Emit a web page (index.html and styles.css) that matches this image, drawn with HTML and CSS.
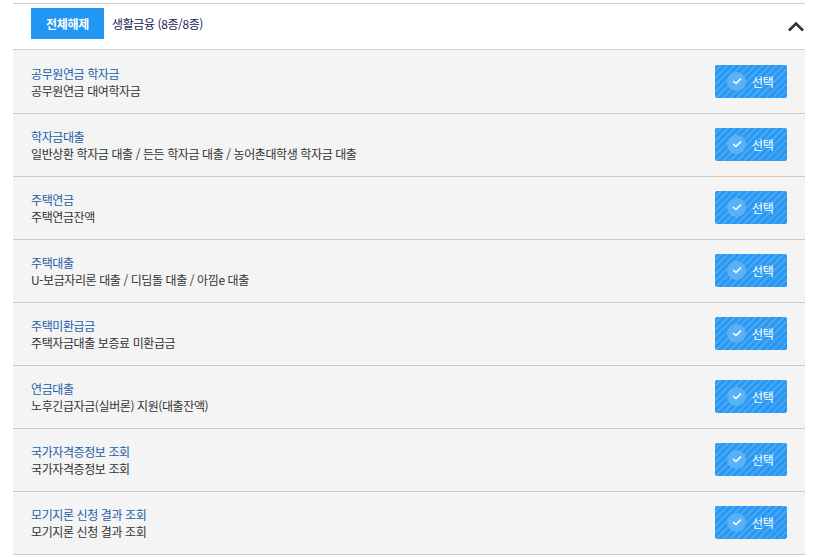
FILE: index.html
```html
<!DOCTYPE html>
<html lang="ko">
<head>
<meta charset="utf-8">
<link rel="stylesheet" href="styles.css">
</head>
<body>
<div class="panel">
  <div class="panel-head">
    <button class="btn-release">전체해제</button>
    <span class="cat">생활금융 (8종/8종)</span>
    <svg class="chev" width="18" height="11" viewBox="0 0 18 11"><path d="M2 9.5 L9 2.5 L16 9.5" fill="none" stroke="#333" stroke-width="2.6"/></svg>
  </div>
  <ul class="list">
    <li class="row"><div class="txt"><div class="t">공무원연금 학자금</div><div class="s">공무원연금 대여학자금</div></div><button class="sel"><span class="ck"><svg width="10" height="8" viewBox="0 0 10 8"><path d="M1 4 L4 6.5 L9 1.5" fill="none" stroke="#fff" stroke-width="1.6"/></svg></span>선택</button></li>
    <li class="row"><div class="txt"><div class="t">학자금대출</div><div class="s">일반상환 학자금 대출 / 든든 학자금 대출 / 농어촌대학생 학자금 대출</div></div><button class="sel"><span class="ck"><svg width="10" height="8" viewBox="0 0 10 8"><path d="M1 4 L4 6.5 L9 1.5" fill="none" stroke="#fff" stroke-width="1.6"/></svg></span>선택</button></li>
    <li class="row"><div class="txt"><div class="t">주택연금</div><div class="s">주택연금잔액</div></div><button class="sel"><span class="ck"><svg width="10" height="8" viewBox="0 0 10 8"><path d="M1 4 L4 6.5 L9 1.5" fill="none" stroke="#fff" stroke-width="1.6"/></svg></span>선택</button></li>
    <li class="row"><div class="txt"><div class="t">주택대출</div><div class="s">U-보금자리론 대출 / 디딤돌 대출 / 아낌e 대출</div></div><button class="sel"><span class="ck"><svg width="10" height="8" viewBox="0 0 10 8"><path d="M1 4 L4 6.5 L9 1.5" fill="none" stroke="#fff" stroke-width="1.6"/></svg></span>선택</button></li>
    <li class="row"><div class="txt"><div class="t">주택미환급금</div><div class="s">주택자금대출 보증료 미환급금</div></div><button class="sel"><span class="ck"><svg width="10" height="8" viewBox="0 0 10 8"><path d="M1 4 L4 6.5 L9 1.5" fill="none" stroke="#fff" stroke-width="1.6"/></svg></span>선택</button></li>
    <li class="row"><div class="txt"><div class="t">연금대출</div><div class="s">노후긴급자금(실버론) 지원(대출잔액)</div></div><button class="sel"><span class="ck"><svg width="10" height="8" viewBox="0 0 10 8"><path d="M1 4 L4 6.5 L9 1.5" fill="none" stroke="#fff" stroke-width="1.6"/></svg></span>선택</button></li>
    <li class="row"><div class="txt"><div class="t">국가자격증정보 조회</div><div class="s">국가자격증정보 조회</div></div><button class="sel"><span class="ck"><svg width="10" height="8" viewBox="0 0 10 8"><path d="M1 4 L4 6.5 L9 1.5" fill="none" stroke="#fff" stroke-width="1.6"/></svg></span>선택</button></li>
    <li class="row"><div class="txt"><div class="t">모기지론 신청 결과 조회</div><div class="s">모기지론 신청 결과 조회</div></div><button class="sel"><span class="ck"><svg width="10" height="8" viewBox="0 0 10 8"><path d="M1 4 L4 6.5 L9 1.5" fill="none" stroke="#fff" stroke-width="1.6"/></svg></span>선택</button></li>
  </ul>
</div>
</body>
</html>
```

FILE: styles.css
```css
html, body {
  margin: 0;
  padding: 0;
  background: #fff;
}
body {
  font-family: "Noto Sans CJK KR", "Noto Sans", sans-serif;
  font-size: 12px;
  color: #333;
  padding: 3px 15px 0 13px;
}
.panel {
  border-top: 1px solid #cfcfcf;
}
.panel-head {
  display: flex;
  align-items: center;
  height: 45px;
  padding: 0 0 0 18px;
  background: #fff;
  border-bottom: 1px solid #cfcfcf;
}
.btn-release {
  width: 73px;
  height: 31px;
  border: 0;
  padding: 0;
  background: #2196f3;
  color: #fff;
  font-family: inherit;
  font-size: 12px;
  font-weight: 700;
  letter-spacing: -0.3px;
  margin-top: -7px;
}
.cat {
  margin-left: 8px;
  margin-top: -7px;
  color: #1b1b55;
  font-size: 12px;
  letter-spacing: -0.4px;
}
.chev {
  margin-left: auto;
  margin-right: 0;
}
.list {
  list-style: none;
  margin: 0;
  padding: 1px 0 0;
  background: #f4f4f4;
}
.row {
  display: flex;
  align-items: center;
  justify-content: space-between;
  height: 62px;
  padding: 0 18px;
  background: #f4f4f4;
  border-bottom: 1px solid #c9c9c9;
}
.txt {
  line-height: 17px;
  letter-spacing: -0.4px;
}
.t {
  color: #225ea8;
}
.s {
  color: #333;
}
.sel {
  display: flex;
  align-items: center;
  width: 72px;
  height: 33px;
  border: 0;
  border-radius: 2px;
  padding: 0 0 0 12px;
  margin-top: -2px;
  background: repeating-linear-gradient(135deg, #2a97f0 0 3px, #45a8f6 3px 5px);
  color: #fff;
  font-family: inherit;
  font-size: 12px;
  letter-spacing: -0.3px;
}
.ck {
  display: flex;
  align-items: center;
  justify-content: center;
  width: 19px;
  height: 19px;
  border-radius: 50%;
  background: #59b2f7;
  margin-right: 6px;
}
```
